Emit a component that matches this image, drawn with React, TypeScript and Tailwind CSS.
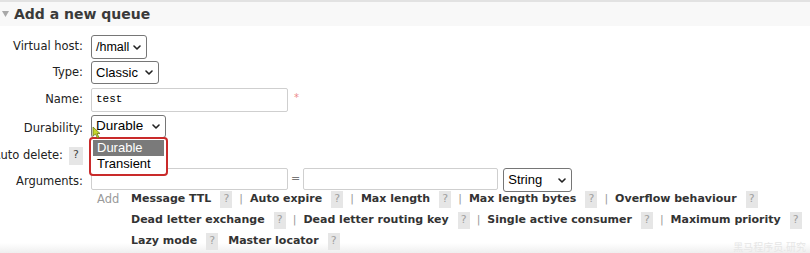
import React from 'react';

const Chevron = () => (
  <svg width="8" height="5" viewBox="0 0 8 5" className="shrink-0">
    <path d="M1 1 L4 4 L7 1" fill="none" stroke="#222" strokeWidth="1.6" strokeLinecap="round" strokeLinejoin="round" />
  </svg>
);

const Select = ({ value, width, height = 'h-[24px]', size = 'text-[13px]' }: { value: string; width: string; height?: string; size?: string }) => (
  <div
    className={`${width} ${height} ${size} flex items-center justify-between pl-[4px] pr-[5px] border border-[#767676] rounded-[3px] bg-white font-['Liberation_Sans',Arial,sans-serif] text-black`}
  >
    <span>{value}</span>
    <Chevron />
  </div>
);

const Help = ({ dark = false }: { dark?: boolean }) => (
  <span
    className={`inline-flex items-center justify-center bg-[#e6e6e6] text-[11px] font-normal ${dark ? 'text-[#444] w-[14px] h-[18px]' : 'text-[#a0a0a0] w-[12px] h-[17px]'}`}
  >
    ?
  </span>
);

const Row = ({ label, h, children, labelPad = '' }: { label: React.ReactNode; h: string; children?: React.ReactNode; labelPad?: string }) => (
  <div className={`flex items-center ${h}`}>
    <div className={`w-[83px] shrink-0 flex justify-end items-center whitespace-nowrap text-[11.5px] ${labelPad}`}>{label}</div>
    <div className="ml-[8px] flex items-center">{children}</div>
  </div>
);

const lines: { items: string[]; sep: boolean }[] = [
  { items: ['Message TTL', 'Auto expire', 'Max length', 'Max length bytes', 'Overflow behaviour'], sep: true },
  { items: ['Dead letter exchange', 'Dead letter routing key', 'Single active consumer', 'Maximum priority'], sep: true },
  { items: ['Lazy mode', 'Master locator'], sep: false },
];

export default function App() {
  return (
    <div className="relative w-[810px] h-[253px] overflow-hidden bg-linear-to-b from-white from-[96%] to-[#efefef] font-['DejaVu_Sans',Verdana,sans-serif] text-[#222]">
      <div className="border-t-2 border-[#e2e2e2] h-[26px] bg-[#f8f8f8] flex items-center">
        <svg width="7" height="6" viewBox="0 0 7 6" className="ml-[2px]">
          <path d="M0 0 L7 0 L3.5 6 Z" fill="#a8a8a8" />
        </svg>
        <span className="ml-[5px] text-[14px] font-bold text-[#3a3a3a]">Add a new queue</span>
      </div>

      <div className="mt-[8px]">
        <Row label="Virtual host:" h="h-[26px]">
          <Select value="/hmall" width="w-[56px]" size="text-[12.5px]" />
        </Row>
        <Row label="Type:" h="h-[25px]">
          <Select value="Classic" width="w-[68px]" height="h-[23px]" />
        </Row>
        <Row label="Name:" h="h-[29px]">
          <div className="w-[197px] h-[24px] border border-[#cfcfcf] rounded-[2px] flex items-center pl-[4px] font-['Liberation_Mono',monospace] text-[11px] text-black">
            test
          </div>
          <span className="ml-[6px] -mt-[5px] text-[10px] text-[#ec8a8a]">*</span>
        </Row>
        <Row label="Durability:" h="h-[28px]" labelPad="pt-[2px]">
          <div className="-mt-[3px]">
            <Select value="Durable" width="w-[75px]" height="h-[23px]" size="text-[13.5px]" />
          </div>
        </Row>
        <Row
          label={
            <>
              <span>Auto delete:</span>
              <span className="ml-[6px]">
                <Help dark />
              </span>
            </>
          }
          h="h-[27px]"
        >
          <Select value="No" width="w-[46px]" height="h-[23px]" />
        </Row>
        <Row label="Arguments:" h="h-[20px]" labelPad="pt-[5px]">
          <div className="w-[197px] h-[22px] border border-[#cfcfcf] rounded-[2px] bg-white" />
          <span className="mx-[3px] text-[11px] text-[#777]">=</span>
          <div className="w-[195px] h-[22px] border border-[#cfcfcf] rounded-[2px] bg-white" />
          <div className="ml-[5px] mt-[2px]">
            <Select value="String" width="w-[69px]" />
          </div>
        </Row>

        <div className="flex ml-[91px]">
          <div className="w-[40px] h-[21px] pl-[6px] flex items-center text-[11.5px] text-[#9a9a9a]">Add</div>
          <div className="flex flex-col">
            {lines.map((line, i) => (
              <div key={i} className="h-[21px] flex items-center text-[11px] font-bold text-[#333] whitespace-nowrap">
                {line.items.map((item, j) => (
                  <React.Fragment key={item}>
                    <span>{item}</span>
                    <span className="ml-[9px]">
                      <Help />
                    </span>
                    {j < line.items.length - 1 &&
                      (line.sep ? (
                        <span className="mx-[7px] font-normal text-[#999]">|</span>
                      ) : (
                        <span className="w-[10px]" />
                      ))}
                  </React.Fragment>
                ))}
              </div>
            ))}
          </div>
        </div>
      </div>

      <div className="absolute left-[89px] top-[137px] w-[79px] h-[39px] border-2 border-[#c92a2a] rounded-[4px] bg-white px-[2px] pt-[1px] font-['Liberation_Sans',Arial,sans-serif] text-[13px] leading-[16px]">
        <div className="h-[16px] pl-[4px] bg-[#7a7a7a] text-white">Durable</div>
        <div className="h-[16px] pl-[4px] text-black">Transient</div>
      </div>

      <svg width="9" height="13" viewBox="0 0 9 13" className="absolute left-[92px] top-[126px]">
        <path d="M1 1 L1 10 L3.5 8 L5.5 12 L7 11.3 L5 7.5 L8 7.5 Z" fill="#c6d62a" stroke="#6b7a1a" strokeWidth="0.8" strokeLinejoin="round" />
      </svg>

      <span className="absolute right-[4px] bottom-0 text-[10px] leading-[12px] text-[#e6e6e6] font-['Noto_Sans_CJK_SC',sans-serif]">
        黑马程序员.研究
      </span>
    </div>
  );
}
